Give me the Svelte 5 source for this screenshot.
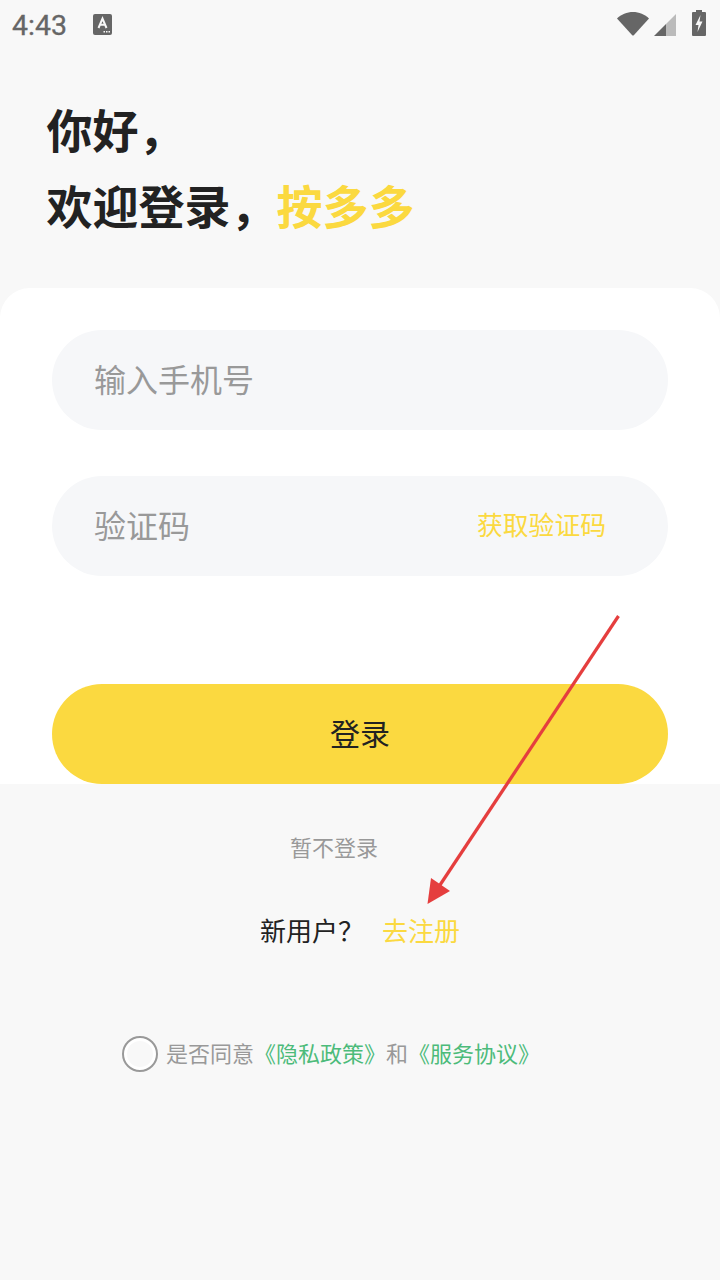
<script lang="ts">
	let agreed = $state(false);
</script>

<div class="page">
	<header class="status">
		<div class="status-left">
			<span class="time">4:43</span>
			<svg class="note" width="19" height="22" viewBox="0 0 19 22">
				<rect x="0" y="0" width="19" height="21" rx="2" fill="#666" />
				<path d="M5.500 14 9.500 4.500 13.500 14M7 10.800h5" fill="none" stroke="#f8f8f8" stroke-width="2" />
				<path d="M10.500 17h1.500v1.500h-1.500zM13 17h1.500v1.500H13zM15.500 17H17v1.500h-1.500z" fill="#f8f8f8" />
			</svg>
		</div>
		<div class="status-right">
			<svg width="32" height="25" viewBox="0 0 32 25">
				<path d="M0 7.500C4 3.500 10 1 16 1S28 3.500 32 7.500L17 24a1.400 1.400 0 0 1-2 0z" fill="#666" />
			</svg>
			<svg width="22" height="23" viewBox="0 0 22 23">
				<path d="M0 23 12 11V23z" fill="#666" />
				<path d="M12 11 22 1V23H12z" fill="#bbb" />
			</svg>
			<svg width="14" height="26" viewBox="0 0 14 26">
				<path d="M4 0h6v2h3a1 1 0 0 1 1 1v22a1 1 0 0 1-1 1H1a1 1 0 0 1-1-1V3a1 1 0 0 1 1-1h3z" fill="#666" />
				<path d="M8.500 5 3.500 15h3L5.500 22 10.500 11.500h-3z" fill="#f8f8f8" />
			</svg>
		</div>
	</header>

	<h1>
		<span>你好，</span>
		<span>欢迎登录，<em>按多多</em></span>
	</h1>

	<section class="card">
		<div class="field first"><span class="ph">输入手机号</span></div>
		<div class="field second">
			<span class="ph">验证码</span>
			<span class="code">获取验证码</span>
		</div>
		<button class="login">登录</button>
	</section>

	<p class="skip">暂不登录</p>
	<p class="register">新用户？<span>去注册</span></p>

	<div class="agree">
		<button class="radio" class:agreed aria-label="同意" onclick={() => (agreed = !agreed)}></button>
		<p>是否同意<a href="#privacy">《隐私政策》</a>和<a href="#terms">《服务协议》</a></p>
	</div>

	<svg class="arrow" width="720" height="1280" viewBox="0 0 720 1280">
		<line x1="618.500" y1="616" x2="438" y2="888" stroke="#e53e3e" stroke-width="3.200" />
		<path d="M427.500 904 431 878 450 891z" fill="#e53e3e" />
	</svg>
</div>

<style>
	:global(body) {
		background: #f8f8f8;
	}

	.page {
		position: relative;
		height: 1280px;
		overflow: hidden;
		background: #f8f8f8;
		font-family: "Noto Sans CJK SC", "Noto Sans", sans-serif;
	}

	.status {
		height: 50px;
		padding: 0 14px 0 12px;
		display: flex;
		justify-content: space-between;
		align-items: center;
	}

	.status-left {
		display: flex;
		align-items: center;
		gap: 26px;
	}

	.time {
		font-family: Roboto, sans-serif;
		font-size: 28.500px;
		color: #666;
		-webkit-text-stroke: 0.3px #666;
	}

	.note {
		margin-top: -1px;
	}

	.status-right {
		align-self: flex-end;
		margin-bottom: 14px;
		display: flex;
		align-items: flex-end;
		gap: 5px;
	}

	.status-right svg:last-child {
		margin-left: 11px;
	}

	h1 {
		margin: 0;
		padding: 40px 0 0 46.500px;
		height: 238px;
		box-sizing: border-box;
		display: flex;
		flex-direction: column;
		font-size: 46px;
		font-weight: 700;
		line-height: 76px;
		color: #222;
	}

	em {
		font-style: normal;
		color: #fbd940;
	}

	.card {
		height: 496px;
		box-sizing: border-box;
		padding: 42px 52px 0;
		background: #fff;
		border-radius: 30px 30px 0 0;
	}

	.field {
		height: 100px;
		padding: 0 62px 5px 42px;
		box-sizing: border-box;
		display: flex;
		justify-content: space-between;
		align-items: center;
		background: #f6f7f9;
		border-radius: 50px;
	}

	.second {
		margin-top: 46px;
	}

	.ph {
		font-size: 32px;
		color: #999;
	}

	.code {
		font-size: 25.800px;
		color: #fbd940;
	}

	.login {
		display: block;
		width: 100%;
		height: 100px;
		margin-top: 108px;
		padding: 0 0 4px;
		border: 0;
		border-radius: 50px;
		background: #fbd940;
		font: inherit;
		font-size: 30px;
		color: #222;
	}

	.skip {
		margin: 44px 0 0;
		padding-right: 52px;
		text-align: center;
		font-size: 22px;
		line-height: 36px;
		color: #999;
	}

	.register {
		margin: 46px 0 0 260px;
		font-size: 26px;
		line-height: 40px;
		color: #222;
	}

	.register span {
		margin-left: 18px;
		color: #fbd940;
	}

	.agree {
		margin: 86px 0 0 122px;
		display: flex;
		align-items: center;
		gap: 8px;
	}

	.radio {
		width: 36px;
		height: 36px;
		padding: 0;
		box-sizing: border-box;
		border: 2px solid #999;
		border-radius: 50%;
		background: #f8f8f8;
		box-shadow: inset 0 0 0 3px #fff;
	}

	.radio.agreed {
		background: #4cbb7a;
	}

	.agree p {
		margin: -4px 0 0;
		font-size: 22px;
		line-height: 36px;
		color: #999;
	}

	.agree a {
		color: #4cbb7a;
		text-decoration: none;
	}

	.arrow {
		position: absolute;
		inset: 0;
		pointer-events: none;
	}
</style>
